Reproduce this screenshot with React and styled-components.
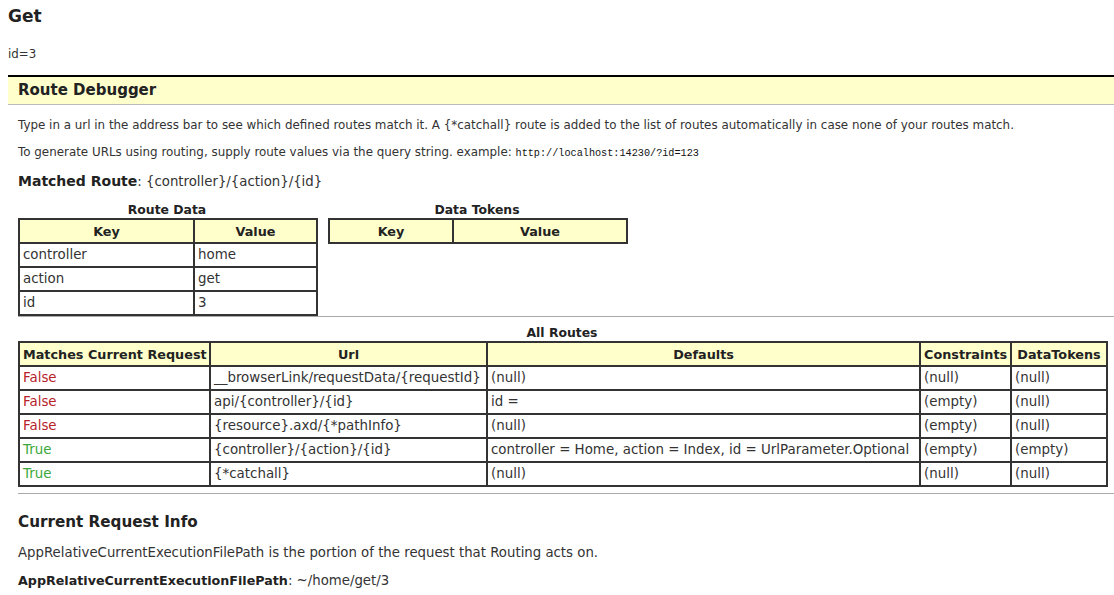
import React from "react";
import styled, { createGlobalStyle } from "styled-components";

const GlobalStyle = createGlobalStyle`
  html, body { margin: 0; padding: 0; background: #fff; }
  body {
    font-family: "DejaVu Sans", Verdana, sans-serif;
    color: #333;
    font-size: 11.9px;
    overflow: hidden;
  }
`;

const Page = styled.div`
  padding-left: 8px;
`;

const Title = styled.h2`
  margin: 0;
  font-size: 17px;
  font-weight: bold;
  line-height: 32px;
  color: #222;
`;

const IdLine = styled.div`
  margin-top: 12px;
  line-height: 20px;
  font-size: 11.8px;
`;

const Debugger = styled.div`
  margin-top: 11px;
  border-top: 2px solid #000;
`;

const DebugHeader = styled.div`
  height: 27px;
  background: #ffffcc;
  border-bottom: 1px solid #bbb;
  padding-left: 10px;
  font-size: 15px;
  font-weight: bold;
  line-height: 27px;
  color: #222;
`;

const Body = styled.div`
  padding-left: 10px;
`;

const Para = styled.p`
  margin: ${(p) => p.$mt || 0}px 0 0;
  line-height: 18px;
  height: 18px;
  font-size: ${(p) => p.$size || 11.9}px;
`;

const Mono = styled.code`
  font-family: "Liberation Mono", "Courier New", monospace;
  font-size: 10.2px;
  line-height: 1;
  color: #111;
`;

const MatchedLine = styled.div`
  margin-top: 11px;
  line-height: 20px;
  height: 20px;
  font-size: 13.3px;
`;

const Label = styled.span`
  font-weight: bold;
  font-size: ${(p) => p.$size}px;
  line-height: 1;
  color: #222;
`;

const TablesRow = styled.div`
  display: flex;
  align-items: flex-start;
  gap: 12px;
  margin-top: 9px;
`;

const TableBlock = styled.div`
  display: flex;
  flex-direction: column;
  width: ${(p) => p.$width}px;
`;

const Caption = styled.div`
  text-align: center;
  font-weight: bold;
  font-size: 12.4px;
  line-height: 17px;
  color: #222;
`;

const Table = styled.table`
  border-collapse: collapse;
  table-layout: fixed;
  width: ${(p) => p.$width}px;
  border: 2px solid #333;
`;

const Th = styled.th`
  background: #ffffcc;
  border: 2px solid #333;
  height: 22px;
  padding: 0 3px;
  font-size: 12.8px;
  font-weight: bold;
  color: #222;
  text-align: center;
  white-space: nowrap;
  overflow: hidden;
`;

const Td = styled.td`
  border: 2px solid #333;
  height: 22px;
  padding: 0 3px;
  font-size: 13.4px;
  line-height: 20px;
  white-space: nowrap;
  overflow: hidden;
  color: ${(p) =>
    p.$match === true ? "#3aa83a" : p.$match === false ? "#b8232b" : "#333"};
`;

const Col = styled.col`
  width: ${(p) => p.$w}px;
`;

const Divider = styled.div`
  border-top: 1px solid #aaa;
  margin-top: ${(p) => p.$mt || 0}px;
`;

const AllRoutesBlock = styled(TableBlock)`
  margin-top: 7px;
`;

const SubHeading = styled.h3`
  margin: 17px 0 0;
  font-size: 15.2px;
  line-height: 22px;
  font-weight: bold;
  color: #222;
`;

const routeData = [
  ["controller", "home"],
  ["action", "get"],
  ["id", "3"],
];

const routes = [
  [false, "__browserLink/requestData/{requestId}", "(null)", "(null)", "(null)"],
  [false, "api/{controller}/{id}", "id =", "(empty)", "(null)"],
  [false, "{resource}.axd/{*pathInfo}", "(null)", "(empty)", "(null)"],
  [true, "{controller}/{action}/{id}", "controller = Home, action = Index, id = UrlParameter.Optional", "(empty)", "(empty)"],
  [true, "{*catchall}", "(null)", "(null)", "(null)"],
];

export default function App() {
  return (
    <>
      <GlobalStyle />
      <Page>
        <Title>Get</Title>
        <IdLine>id=3</IdLine>
        <Debugger>
          <DebugHeader>Route Debugger</DebugHeader>
          <Body>
            <Para $mt={11}>
              Type in a url in the address bar to see which defined routes match it. A {"{*catchall}"} route is added to the list of routes automatically in case none of your routes match.
            </Para>
            <Para $mt={9}>
              To generate URLs using routing, supply route values via the query string. example: <Mono>http://localhost:14230/?id=123</Mono>
            </Para>
            <MatchedLine>
              <Label $size={14}>Matched Route</Label>: {"{controller}/{action}/{id}"}
            </MatchedLine>
            <TablesRow>
              <TableBlock $width={298}>
                <Caption>Route Data</Caption>
                <Table $width={298}>
                  <colgroup>
                    <Col $w={175} />
                    <Col $w={123} />
                  </colgroup>
                  <thead>
                    <tr>
                      <Th>Key</Th>
                      <Th>Value</Th>
                    </tr>
                  </thead>
                  <tbody>
                    {routeData.map(([k, v]) => (
                      <tr key={k}>
                        <Td>{k}</Td>
                        <Td>{v}</Td>
                      </tr>
                    ))}
                  </tbody>
                </Table>
              </TableBlock>
              <TableBlock $width={298}>
                <Caption>Data Tokens</Caption>
                <Table $width={298}>
                  <colgroup>
                    <Col $w={124} />
                    <Col $w={174} />
                  </colgroup>
                  <thead>
                    <tr>
                      <Th>Key</Th>
                      <Th>Value</Th>
                    </tr>
                  </thead>
                </Table>
              </TableBlock>
            </TablesRow>
            <Divider />
            <AllRoutesBlock $width={1088}>
              <Caption>All Routes</Caption>
              <Table $width={1088}>
                <colgroup>
                  <Col $w={191} />
                  <Col $w={277} />
                  <Col $w={433} />
                  <Col $w={91} />
                  <Col $w={96} />
                </colgroup>
                <thead>
                  <tr>
                    <Th>Matches Current Request</Th>
                    <Th>Url</Th>
                    <Th>Defaults</Th>
                    <Th>Constraints</Th>
                    <Th>DataTokens</Th>
                  </tr>
                </thead>
                <tbody>
                  {routes.map((r, i) => (
                    <tr key={i}>
                      <Td $match={r[0]}>{r[0] ? "True" : "False"}</Td>
                      <Td>{r[1]}</Td>
                      <Td>{r[2]}</Td>
                      <Td>{r[3]}</Td>
                      <Td>{r[4]}</Td>
                    </tr>
                  ))}
                </tbody>
              </Table>
            </AllRoutesBlock>
            <Divider $mt={6} />
            <SubHeading>Current Request Info</SubHeading>
            <Para $mt={11} $size={13.3}>
              AppRelativeCurrentExecutionFilePath is the portion of the request that Routing acts on.
            </Para>
            <Para $mt={10} $size={13.3}>
              <Label $size={12.7}>AppRelativeCurrentExecutionFilePath</Label>: ~/home/get/3
            </Para>
          </Body>
        </Debugger>
      </Page>
    </>
  );
}
